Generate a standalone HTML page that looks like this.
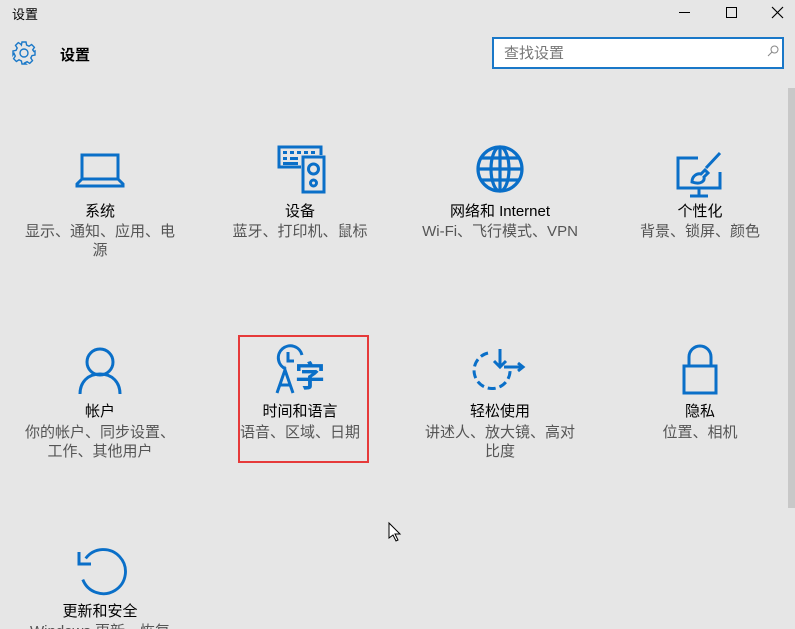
<!DOCTYPE html>
<html><head><meta charset="utf-8"><style>
html,body{margin:0;width:795px;height:629px;overflow:hidden}
body{background:#e6e6e6;font-family:"Liberation Sans","Noto Sans CJK SC",sans-serif;position:relative}
.a{position:absolute}
.t{position:absolute;width:200px;text-align:center;font-size:15px;color:#000;line-height:19px}
.s{position:absolute;width:152px;text-align:center;font-size:15px;color:#555;line-height:19px}
svg{position:absolute;overflow:visible}
</style></head><body>
<div class="a" style="left:12px;top:4px;font-size:13px">设置</div>
<div class="a" style="left:679px;top:12px;width:11px;height:1px;background:#000"></div>
<div class="a" style="left:726px;top:7px;width:9px;height:9px;border:1px solid #000"></div>
<svg style="left:772px;top:7px" width="11" height="11"><path d="M0 0L11 11M11 0L0 11" stroke="#000" stroke-width="1.2"/></svg>
<svg style="left:12px;top:41px" width="24" height="24" viewBox="0 0 24 24"><g fill="none" stroke="#1a78c8" stroke-width="1.4"><circle cx="12" cy="12" r="4"/><path d="M10 1h4l.6 3 2.4 1.2 2.6-1.7 2.8 2.8-1.7 2.6L21.900 10.5 23 10v4l-3 .6-1.2 2.4 1.7 2.6-2.8 2.8-2.6-1.7-2.4 1.200L14 23h-4l-.6-3-2.4-1.2-2.6 1.7-2.8-2.8 1.7-2.6L2.100 12.5 1 14v-4l3-.6 1.2-2.4-1.7-2.600 2.8-2.8 2.6 1.7L9.4 4z"/></g></svg>
<div class="a" style="left:60px;top:44px;font-size:15px;font-weight:bold">设置</div>
<div class="a" style="left:492px;top:37px;width:292px;height:32px;border:2px solid #1a78c8;background:#fff;box-sizing:border-box"></div>
<div class="a" style="left:504px;top:42px;font-size:15px;color:#777">查找设置</div>
<svg style="left:767px;top:45px" width="12" height="12"><circle cx="7.5" cy="4.5" r="3.5" fill="none" stroke="#888"/><path d="M5 7L1 11" stroke="#888"/></svg>
<div class="a" style="left:788px;top:88px;width:7px;height:420px;background:#c8c8c8"></div>

<svg style="left:76px;top:153px" width="48" height="34"><g fill="none" stroke="#0a6fc8" stroke-width="3"><rect x="6" y="2" width="36" height="24"/><path d="M6 26L1 31v2h46v-2l-5-5"/></g></svg>
<svg style="left:277px;top:145px" width="48" height="48"><g fill="none" stroke="#0a6fc8" stroke-width="3"><path d="M24 22H2V2h42v8"/><rect x="26" y="12" width="21" height="35"/><circle cx="36.500" cy="24" r="5"/><circle cx="36.500" cy="38" r="3"/></g><g fill="#0a6fc8"><rect x="6" y="6" width="4" height="3"/><rect x="13" y="6" width="4" height="3"/><rect x="20" y="6" width="4" height="3"/><rect x="27" y="6" width="4" height="3"/><rect x="34" y="6" width="4" height="3"/><rect x="6" y="12" width="4" height="3"/><rect x="13" y="12" width="8" height="3"/><rect x="6" y="17" width="15" height="3"/></g></svg>
<svg style="left:476px;top:145px" width="48" height="48"><g fill="none" stroke="#0a6fc8" stroke-width="3.2"><circle cx="24" cy="24" r="22"/><ellipse cx="24" cy="24" rx="9" ry="22"/><path d="M24 2v44M2 24h44M6 13h36M6 35h36"/></g></svg>
<svg style="left:676px;top:150px" width="48" height="48"><g fill="none" stroke="#0a6fc8" stroke-width="3"><path d="M22 8H2v30h42V22"/><path d="M23 38v7M14 46h18"/><path d="M44 3L30 18M16 32c0-6 5-9 9-8l4-4 3 3-4 4c1 4-3 8-12 5z"/></g></svg>

<div class="t" style="left:0;top:202px">系统</div>
<div class="s" style="left:24px;top:222px">显示、通知、应用、电源</div>
<div class="t" style="left:200px;top:202px">设备</div>
<div class="s" style="left:224px;top:222px">蓝牙、打印机、鼠标</div>
<div class="t" style="left:400px;top:202px">网络和 Internet</div>
<div class="s" style="left:410px;top:222px;width:180px">Wi-Fi、飞行模式、VPN</div>
<div class="t" style="left:600px;top:202px">个性化</div>
<div class="s" style="left:624px;top:222px">背景、锁屏、颜色</div>

<svg style="left:78px;top:345px" width="46" height="50"><g fill="none" stroke="#0a6fc8" stroke-width="3"><circle cx="22" cy="17" r="13"/><path d="M2 49c0-12 8-20 20-20s20 8 20 20"/></g></svg>
<svg style="left:274px;top:345px" width="56" height="52"><g fill="none" stroke="#0a6fc8" stroke-width="3"><path d="M12 24A12 12 0 1 1 28 10"/><path d="M14 7v9h6"/><path d="M3 48L11 25L19 48M6 40h10"/></g><text x="21" y="42" font-size="30" font-weight="bold" fill="#0a6fc8" font-family="Noto Sans CJK SC">字</text></svg>
<svg style="left:474px;top:347px" width="52" height="44"><g fill="none" stroke="#0a6fc8" stroke-width="3"><path d="M14 6A18 18 0 1 0 36 22" stroke-dasharray="8 4"/><path d="M26 2v18M20 14l6 6 6-6M30 20h18M44 16l5 4-5 4"/></g></svg>
<svg style="left:680px;top:345px" width="40" height="50"><g fill="none" stroke="#0a6fc8" stroke-width="3"><rect x="4" y="21" width="32" height="27"/><path d="M9 21V12a11 11 0 0 1 22 0v9"/></g></svg>

<div class="a" style="left:238px;top:335px;width:127px;height:124px;border:2px solid #e63a3a"></div>
<div class="t" style="left:0;top:402px">帐户</div>
<div class="s" style="left:24px;top:423px">你的帐户、同步设置、工作、其他用户</div>
<div class="t" style="left:200px;top:402px">时间和语言</div>
<div class="s" style="left:224px;top:423px">语音、区域、日期</div>
<div class="t" style="left:400px;top:402px">轻松使用</div>
<div class="s" style="left:424px;top:423px">讲述人、放大镜、高对比度</div>
<div class="t" style="left:600px;top:402px">隐私</div>
<div class="s" style="left:624px;top:423px">位置、相机</div>

<svg style="left:76px;top:545px" width="50" height="50"><g fill="none" stroke="#0a6fc8" stroke-width="3"><path d="M8 14A23 23 0 1 1 5 36" transform="translate(2,0) scale(0.96)"/><path d="M3 7v12h12"/></g></svg>
<div class="t" style="left:0;top:602px">更新和安全</div>
<div class="s" style="left:10px;top:622px;width:180px">Windows 更新、恢复</div>

<svg style="left:388px;top:522px" width="14" height="20"><path d="M1 1v15l4-3 3 6 2-1-3-6h5z" fill="#fff" stroke="#000"/></svg>
</body></html>
